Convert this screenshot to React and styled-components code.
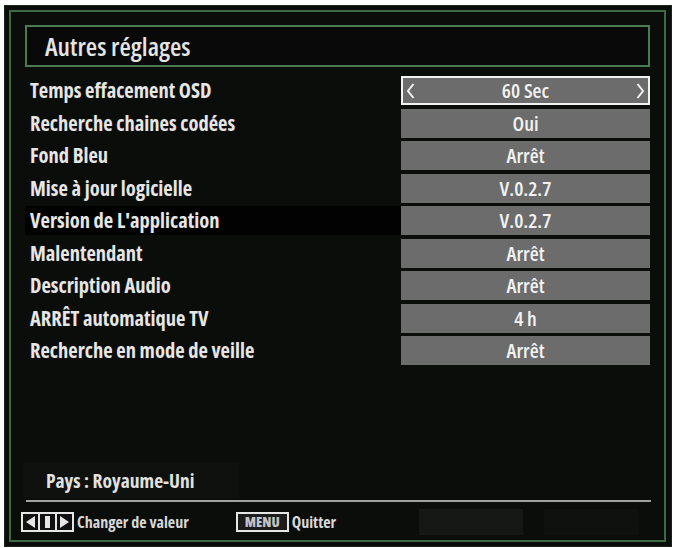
import React from "react";
import styled, { createGlobalStyle } from "styled-components";

const GlobalStyle = createGlobalStyle`
  body {
    margin: 0;
    background: #ffffff;
    font-family: "Open Sans", "DejaVu Sans", sans-serif;
    font-stretch: 75%;
  }
`;

const Screen = styled.div`
  width: 668px;
  height: 542px;
  margin: 5px 0 0 4px;
  padding: 4px 5px 4px 4px;
  box-sizing: border-box;
  background: #0b0d0b;
  border: 1px solid #18261a;
`;

const Frame = styled.div`
  height: 100%;
  box-sizing: border-box;
  border: 2px solid #3e6a45;
  padding: 13px 14px 4px 14px;
  display: flex;
  flex-direction: column;
`;

const TitleBox = styled.div`
  height: 42px;
  box-sizing: border-box;
  border: 2px solid #4b7b52;
  background: #080908;
  display: flex;
  align-items: center;
  padding-left: 18px;
  color: #e4e4e4;
  font-size: 26px;
  font-weight: 600;
`;

const List = styled.div`
  margin-top: 9px;
  display: flex;
  flex-direction: column;
  gap: 3.5px;
`;

const Row = styled.div`
  display: flex;
  align-items: center;
  height: 29px;
  background: ${(p) => (p.$dim ? "#020202" : "transparent")};
`;

const Label = styled.div`
  flex: 1;
  padding-left: 5px;
  color: #e6e6e6;
  font-size: 20.5px;
  font-weight: bold;
  line-height: 1;
`;

const Value = styled.div`
  width: 249px;
  height: 29px;
  box-sizing: border-box;
  background: #6c6c6c;
  border: 2px solid ${(p) => (p.$active ? "#f2f2f2" : "#6c6c6c")};
  display: flex;
  align-items: center;
  justify-content: space-between;
  padding: 0 3px;
  color: #f2f2f2;
  font-size: 20.5px;
  font-weight: 650;
  line-height: 1;
`;

const Chevron = styled.svg`
  width: 9px;
  height: 18px;
  visibility: ${(p) => (p.$show ? "visible" : "hidden")};
`;

function Arrow({ show, dir }) {
  const pts = dir === "left" ? "7.5,2 2,9 7.5,16" : "1.5,2 7,9 1.5,16";
  return (
    <Chevron $show={show} viewBox="0 0 9 18">
      <polyline points={pts} fill="none" stroke="#f2f2f2" strokeWidth="2" />
    </Chevron>
  );
}

const Spacer = styled.div`
  flex: 1;
`;

const Country = styled.div`
  height: 35px;
  width: 193px;
  margin-left: -2px;
  display: flex;
  align-items: center;
  padding-left: 23px;
  background: #0f110f;
  color: #e2e2e2;
  font-size: 19.5px;
  font-weight: bold;
  margin-bottom: 2px;
`;

const Separator = styled.div`
  height: 2px;
  margin: 0 -1px 0 1px;
  background: #a2a2a2;
`;

const Footer = styled.div`
  height: 28px;
  margin-top: 6px;
  display: flex;
  align-items: center;
  margin-left: -4px;
`;

const Hint = styled.span`
  color: #d8d8d8;
  font-size: 16px;
  font-weight: bold;
  margin-left: 3px;
  margin-right: ${(p) => p.$gap || 0}px;
`;

const MenuKey = styled.span`
  width: 53px;
  height: 20px;
  box-sizing: border-box;
  border: 2px solid #e6e6e6;
  background: #1c1c1c;
  display: flex;
  align-items: center;
  justify-content: center;
  color: #c4c4c4;
  font-size: 14px;
  font-weight: 800;
  line-height: 1;
`;

const Blanks = styled.div`
  margin-left: auto;
  margin-right: 11px;
  display: flex;
  gap: 21px;
`;

const Blank = styled.div`
  width: ${(p) => p.$w}px;
  height: 26px;
  background: ${(p) => p.$bg};
`;

function ArrowKeys() {
  return (
    <svg width="53" height="20" viewBox="0 0 53 20">
      <rect x="1" y="1" width="51" height="18" fill="#111" stroke="#e6e6e6" strokeWidth="2" />
      <polygon points="5,10 14,4 14,16" fill="#e6e6e6" />
      <rect x="17" y="2" width="2" height="16" fill="#e6e6e6" />
      <rect x="24" y="4" width="5" height="12" fill="#e6e6e6" />
      <rect x="34" y="2" width="2" height="16" fill="#e6e6e6" />
      <polygon points="48,10 39,4 39,16" fill="#e6e6e6" />
    </svg>
  );
}

const settings = [
  { label: "Temps effacement OSD", value: "60 Sec", active: true },
  { label: "Recherche chaines codées", value: "Oui" },
  { label: "Fond Bleu", value: "Arrêt" },
  { label: "Mise à jour logicielle", value: "V.0.2.7" },
  { label: "Version de L'application", value: "V.0.2.7", dim: true },
  { label: "Malentendant", value: "Arrêt" },
  { label: "Description Audio", value: "Arrêt" },
  { label: "ARRÊT automatique TV", value: "4 h" },
  { label: "Recherche en mode de veille", value: "Arrêt" },
];

export default function App() {
  return (
    <>
      <GlobalStyle />
      <Screen>
        <Frame>
          <TitleBox>Autres réglages</TitleBox>
          <List>
            {settings.map((s) => (
              <Row key={s.label} $dim={s.dim}>
                <Label>{s.label}</Label>
                <Value $active={s.active}>
                  <Arrow show={s.active} dir="left" />
                  <span>{s.value}</span>
                  <Arrow show={s.active} dir="right" />
                </Value>
              </Row>
            ))}
          </List>
          <Spacer />
          <Country>Pays : Royaume-Uni</Country>
          <Separator />
          <Footer>
            <ArrowKeys />
            <Hint $gap={47}>Changer de valeur</Hint>
            <MenuKey>MENU</MenuKey>
            <Hint>Quitter</Hint>
            <Blanks>
              <Blank $w={104} $bg="#161816" />
              <Blank $w={95} $bg="#0f110f" />
            </Blanks>
          </Footer>
        </Frame>
      </Screen>
    </>
  );
}
